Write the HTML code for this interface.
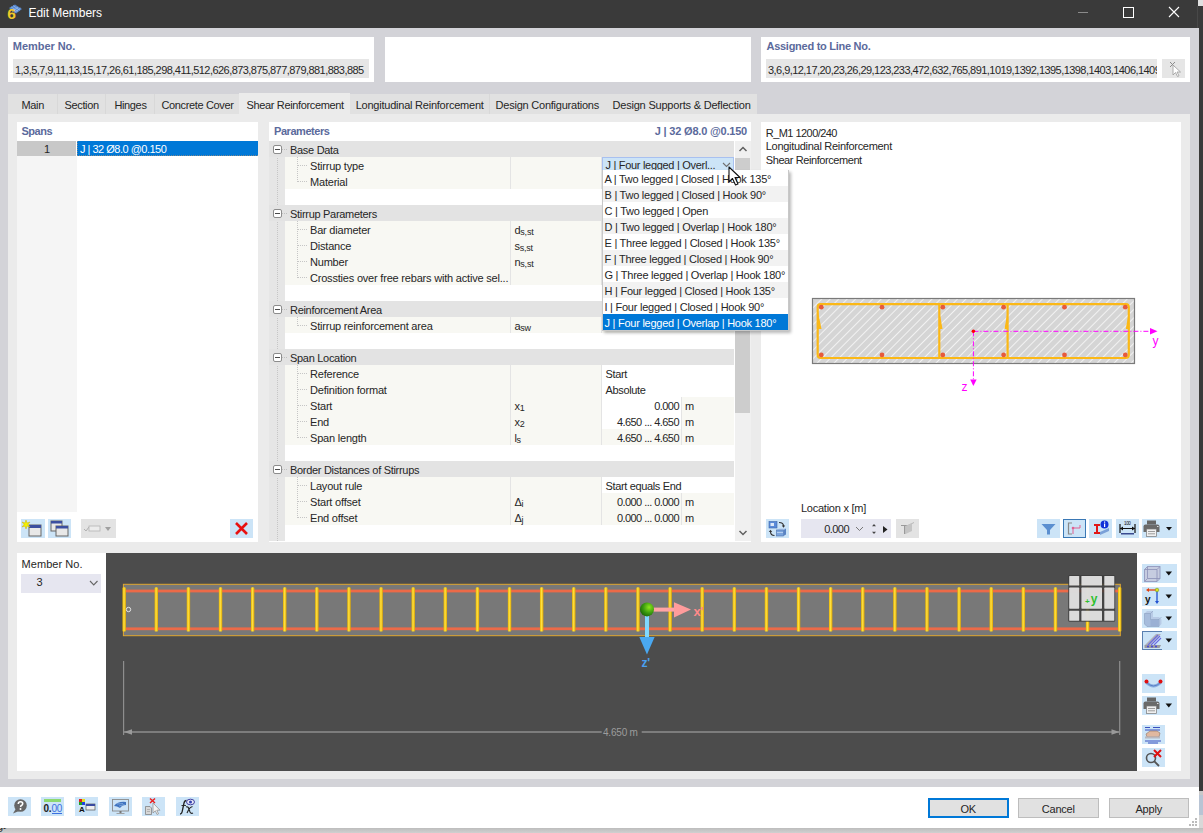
<!DOCTYPE html>
<html><head><meta charset="utf-8">
<style>
*{box-sizing:border-box;margin:0;padding:0}
html,body{width:1203px;height:833px;overflow:hidden}
body{position:relative;background:#d3d3d8;font-family:"Liberation Sans",sans-serif;font-size:11px;color:#262626;letter-spacing:-0.35px}
.a{position:absolute}
.t{position:absolute;white-space:nowrap;line-height:16px}
.w{background:#fff}
.hdr{font-weight:bold;color:#5b6a9c;letter-spacing:-0.45px}
.dig{letter-spacing:-0.55px}
svg{position:absolute;overflow:visible}
.btn{position:absolute;background:#cce4f7}
</style></head><body>

<div class="a" style="left:0px;top:0px;width:1203px;height:28px;background:#3a3a3a;"></div>
<div class="a" style="left:1199px;top:0px;width:4px;height:791px;background:#3a3a3a;"></div>
<div class="a" style="left:1198px;top:0px;width:5px;height:6px;background:#e0e0e0;"></div>
<div class="a" style="left:1197px;top:6px;width:1px;height:22px;background:#484848;"></div>
<svg style="left:0px;top:0px" width="28" height="24" viewBox="0 0 28 24">
<path d="M9 8L15 4.4L22 9L16 13.6Z" fill="#5585cc"/><path d="M11 6.8L18 11.3M13 5.6L20 10.2M12 11.6L18 7.2M14.5 12.5L20.5 8" stroke="#9cc0ee" stroke-width="0.7"/>
<text x="7.3" y="19.4" font-family="Liberation Sans" font-weight="bold" font-size="15.5" fill="#f0c828" style="letter-spacing:0">6</text></svg>
<div class="t" style="left:28.5px;top:5px;color:#fff;font-size:12px;letter-spacing:-0.05px">Edit Members</div>
<div class="a" style="left:1078px;top:12px;width:10px;height:1px;background:#8a8a8a;"></div>
<div class="a" style="left:1123px;top:7px;width:10.5px;height:10.5px;border:1px solid #fff"></div>
<svg style="left:1168px;top:6px" width="12" height="12"><path d="M1 1L11 11M11 1L1 11" stroke="#fff" stroke-width="1.1"/></svg>
<div class="a" style="left:8px;top:37px;width:366px;height:45px;background:#fff;"></div>
<div class="a" style="left:385px;top:37px;width:366px;height:45px;background:#fff;"></div>
<div class="a" style="left:761px;top:37px;width:429px;height:45px;background:#fff;"></div>
<div class="t hdr" style="left:12.8px;top:37.5px;letter-spacing:-0.05px">Member No.</div>
<div class="a" style="left:13px;top:59px;width:356px;height:19px;background:#e6e6e6;"></div>
<div class="t dig" style="left:15px;top:61.5px;">1,3,5,7,9,11,13,15,17,26,61,185,298,411,512,626,873,875,877,879,881,883,885</div>
<div class="t hdr" style="left:766.5px;top:37.5px;letter-spacing:-0.27px">Assigned to Line No.</div>
<div class="a" style="left:766px;top:59px;width:391px;height:19px;background:#e6e6e6;overflow:hidden">
<div class="t dig" style="left:2px;top:2.5px;">3,6,9,12,17,20,23,26,29,123,233,472,632,765,891,1019,1392,1395,1398,1403,1406,1409</div>
</div>
<div class="a" style="left:1162px;top:59px;width:23px;height:19px;background:#e6e6e6;"></div>
<svg style="left:1167.5px;top:60.5px" width="16" height="16"><path d="M2 1L7 6M7 1L2 6" stroke="#8c8c8c" stroke-width="1"/><path d="M5 4L5 14L7.5 11.5L9.5 15.5L11 14.8L9 11L12.5 11Z" fill="#fff" stroke="#9a9a9a" stroke-width="0.8"/></svg>
<div class="a" style="left:8px;top:94px;width:749px;height:20px;background:#e1e1e1;"></div>
<div class="a" style="left:57px;top:94px;width:1px;height:20px;background:#d8d8d8;"></div>
<div class="a" style="left:105px;top:94px;width:1px;height:20px;background:#d8d8d8;"></div>
<div class="a" style="left:154px;top:94px;width:1px;height:20px;background:#d8d8d8;"></div>
<div class="a" style="left:489px;top:94px;width:1px;height:20px;background:#d8d8d8;"></div>
<div class="a" style="left:8px;top:114px;width:1182px;height:665px;background:#ebebeb;"></div>
<div class="a" style="left:239px;top:93px;width:111px;height:21px;background:#ebebeb;"></div>
<div class="t" style="left:21.5px;top:96.8px;letter-spacing:-0.35px">Main</div>
<div class="t" style="left:64.5px;top:96.8px;letter-spacing:-0.35px">Section</div>
<div class="t" style="left:114.4px;top:96.8px;letter-spacing:-0.35px">Hinges</div>
<div class="t" style="left:161.4px;top:96.8px;letter-spacing:-0.35px">Concrete Cover</div>
<div class="t" style="left:246.5px;top:96.8px;letter-spacing:-0.35px">Shear Reinforcement</div>
<div class="t" style="left:355.7px;top:96.8px;letter-spacing:-0.23px">Longitudinal Reinforcement</div>
<div class="t" style="left:495.6px;top:96.8px;letter-spacing:-0.23px">Design Configurations</div>
<div class="t" style="left:612.5px;top:96.8px;letter-spacing:-0.2px">Design Supports &amp; Deflection</div>
<div class="a" style="left:17px;top:122px;width:241px;height:420px;background:#fff;"></div>
<div class="a" style="left:269px;top:122px;width:482px;height:420px;background:#fff;"></div>
<div class="a" style="left:761px;top:122px;width:420px;height:420px;background:#fff;"></div>
<div class="t hdr" style="left:21.4px;top:122.80000000000001px;">Spans</div>
<div class="a" style="left:17px;top:156px;width:60px;height:356px;background:#f5f5f5;"></div>
<div class="a" style="left:17px;top:141px;width:59px;height:15px;background:#c8c8c8;"></div>
<div class="t" style="left:44px;top:140.8px;">1</div>
<div class="a" style="left:77px;top:141px;width:181px;height:15px;background:#0078d7;"></div>
<div class="a" style="left:77px;top:141px;width:181px;height:15px;border-left:1px dotted rgba(230,150,80,0.55);border-bottom:1px dotted rgba(230,150,80,0.55)"></div>
<div class="t" style="left:80px;top:140.8px;color:#fff;letter-spacing:-0.5px">J | 32 Ø8.0 @0.150</div>
<div class="a" style="left:21px;top:519px;width:24px;height:19px;background:#cce4f7;"></div>
<div class="a" style="left:48px;top:519px;width:23px;height:19px;background:#cce4f7;"></div>
<div class="a" style="left:81px;top:519px;width:35px;height:19px;background:#e3e3e3;"></div>
<div class="a" style="left:230px;top:519px;width:23px;height:19px;background:#cce4f7;"></div>
<svg style="left:21px;top:519px" width="24" height="19">
<rect x="8" y="6" width="12" height="11" fill="#e8e8e8" stroke="#666" stroke-width="1"/><rect x="8" y="6" width="12" height="3" fill="#3c4fa0"/>
<path d="M5 1L6 4L9 3L7 5.5L9 8L6 7L5 10L4 7L1 8L3 5.5L1 3L4 4Z" fill="#f5f000" stroke="#c8b400" stroke-width="0.5"/></svg>
<svg style="left:48px;top:519px" width="23" height="19">
<rect x="3" y="2" width="11" height="10" fill="#e8e8e8" stroke="#666"/><rect x="3" y="2" width="11" height="2.5" fill="#3c4fa0"/>
<rect x="8" y="7" width="12" height="10" fill="#e8e8e8" stroke="#666"/><rect x="8" y="7" width="12" height="2.5" fill="#3c4fa0"/></svg>
<svg style="left:81px;top:519px" width="35" height="19">
<path d="M3 10L5 12L8 8" stroke="#b0b0b0" fill="none"/><rect x="8" y="7" width="11" height="5" fill="#ececec" stroke="#b5b5b5" stroke-width="0.8"/><path d="M24 8L30 8L27 12Z" fill="#a0a0a0"/></svg>
<svg style="left:230px;top:519px" width="23" height="19"><path d="M6 4L17 15M17 4L6 15" stroke="#e81010" stroke-width="2.6"/></svg>
<div class="t hdr" style="left:274px;top:123px;">Parameters</div>
<div class="t hdr" style="left:560px;width:187px;top:123px;text-align:right;letter-spacing:-0.2px">J | 32 Ø8.0 @0.150</div>
<div class="a" style="left:269px;top:141px;width:16px;height:400px;background:#e6e6e6;"></div>
<div class="a" style="left:277px;top:141px;width:0;height:400px;border-left:1px dotted #c6c6c6"></div>
<div class="a" style="left:269px;top:141px;width:465px;height:16px;background:#e3e3e3;"></div>
<div class="a" style="left:273px;top:145px;width:9px;height:9px;border:1px solid #8c8c8c;border-radius:2px;background:#fff"></div>
<div class="a" style="left:275px;top:149px;width:5px;height:1px;background:#4a4a4a;"></div>
<div class="a" style="left:282px;top:149px;width:5px;height:0;border-top:1px dotted #c0c0c0"></div>
<div class="t" style="left:290px;top:141.5px;letter-spacing:-0.3px">Base Data</div>
<div class="a" style="left:285px;top:157px;width:449px;height:16px;background:#f8f8f3;"></div>
<div class="a" style="left:510px;top:157px;width:1px;height:16px;background:#e4e4e4;"></div>
<div class="a" style="left:601px;top:157px;width:1px;height:16px;background:#e4e4e4;"></div>
<div class="a" style="left:298px;top:165px;width:9px;height:0;border-top:1px dotted #c6c6c6"></div>
<div class="t" style="left:310px;top:157.5px;letter-spacing:-0.2px">Stirrup type</div>
<div class="a" style="left:285px;top:173px;width:449px;height:16px;background:#f8f8f3;"></div>
<div class="a" style="left:510px;top:173px;width:1px;height:16px;background:#e4e4e4;"></div>
<div class="a" style="left:601px;top:173px;width:1px;height:16px;background:#e4e4e4;"></div>
<div class="a" style="left:298px;top:181px;width:9px;height:0;border-top:1px dotted #c6c6c6"></div>
<div class="t" style="left:310px;top:173.5px;letter-spacing:-0.2px">Material</div>
<div class="a" style="left:285px;top:189px;width:449px;height:16px;background:#fff;"></div>
<div class="a" style="left:269px;top:205px;width:465px;height:16px;background:#e3e3e3;"></div>
<div class="a" style="left:273px;top:209px;width:9px;height:9px;border:1px solid #8c8c8c;border-radius:2px;background:#fff"></div>
<div class="a" style="left:275px;top:213px;width:5px;height:1px;background:#4a4a4a;"></div>
<div class="a" style="left:282px;top:213px;width:5px;height:0;border-top:1px dotted #c0c0c0"></div>
<div class="t" style="left:290px;top:205.5px;letter-spacing:-0.3px">Stirrup Parameters</div>
<div class="a" style="left:285px;top:221px;width:449px;height:16px;background:#f8f8f3;"></div>
<div class="a" style="left:510px;top:221px;width:1px;height:16px;background:#e4e4e4;"></div>
<div class="a" style="left:601px;top:221px;width:1px;height:16px;background:#e4e4e4;"></div>
<div class="a" style="left:298px;top:229px;width:9px;height:0;border-top:1px dotted #c6c6c6"></div>
<div class="t" style="left:310px;top:221.5px;letter-spacing:-0.2px">Bar diameter</div>
<div class="t" style="left:514.5px;top:221.5px;">d<span style="font-size:9px;position:relative;top:1px;letter-spacing:-0.2px">s,st</span></div>
<div class="a" style="left:285px;top:237px;width:449px;height:16px;background:#f8f8f3;"></div>
<div class="a" style="left:510px;top:237px;width:1px;height:16px;background:#e4e4e4;"></div>
<div class="a" style="left:601px;top:237px;width:1px;height:16px;background:#e4e4e4;"></div>
<div class="a" style="left:298px;top:245px;width:9px;height:0;border-top:1px dotted #c6c6c6"></div>
<div class="t" style="left:310px;top:237.5px;letter-spacing:-0.2px">Distance</div>
<div class="t" style="left:514.5px;top:237.5px;">s<span style="font-size:9px;position:relative;top:1px;letter-spacing:-0.2px">s,st</span></div>
<div class="a" style="left:285px;top:253px;width:449px;height:16px;background:#f8f8f3;"></div>
<div class="a" style="left:510px;top:253px;width:1px;height:16px;background:#e4e4e4;"></div>
<div class="a" style="left:601px;top:253px;width:1px;height:16px;background:#e4e4e4;"></div>
<div class="a" style="left:298px;top:261px;width:9px;height:0;border-top:1px dotted #c6c6c6"></div>
<div class="t" style="left:310px;top:253.5px;letter-spacing:-0.2px">Number</div>
<div class="t" style="left:514.5px;top:253.5px;">n<span style="font-size:9px;position:relative;top:1px;letter-spacing:-0.2px">s,st</span></div>
<div class="a" style="left:285px;top:269px;width:449px;height:16px;background:#f8f8f3;"></div>
<div class="a" style="left:510px;top:269px;width:1px;height:16px;background:#e4e4e4;"></div>
<div class="a" style="left:601px;top:269px;width:1px;height:16px;background:#e4e4e4;"></div>
<div class="a" style="left:298px;top:277px;width:9px;height:0;border-top:1px dotted #c6c6c6"></div>
<div class="t" style="left:310px;top:269.5px;letter-spacing:-0.2px">Crossties over free rebars with active sel...</div>
<div class="a" style="left:285px;top:285px;width:449px;height:16px;background:#fff;"></div>
<div class="a" style="left:269px;top:301px;width:465px;height:16px;background:#e3e3e3;"></div>
<div class="a" style="left:273px;top:305px;width:9px;height:9px;border:1px solid #8c8c8c;border-radius:2px;background:#fff"></div>
<div class="a" style="left:275px;top:309px;width:5px;height:1px;background:#4a4a4a;"></div>
<div class="a" style="left:282px;top:309px;width:5px;height:0;border-top:1px dotted #c0c0c0"></div>
<div class="t" style="left:290px;top:301.5px;letter-spacing:-0.3px">Reinforcement Area</div>
<div class="a" style="left:285px;top:317px;width:449px;height:16px;background:#f8f8f3;"></div>
<div class="a" style="left:510px;top:317px;width:1px;height:16px;background:#e4e4e4;"></div>
<div class="a" style="left:601px;top:317px;width:1px;height:16px;background:#e4e4e4;"></div>
<div class="a" style="left:298px;top:325px;width:9px;height:0;border-top:1px dotted #c6c6c6"></div>
<div class="t" style="left:310px;top:317.5px;letter-spacing:-0.2px">Stirrup reinforcement area</div>
<div class="t" style="left:514.5px;top:317.5px;">a<span style="font-size:9px;position:relative;top:1px;letter-spacing:-0.2px">sw</span></div>
<div class="a" style="left:285px;top:333px;width:449px;height:16px;background:#fff;"></div>
<div class="a" style="left:269px;top:349px;width:465px;height:16px;background:#e3e3e3;"></div>
<div class="a" style="left:273px;top:353px;width:9px;height:9px;border:1px solid #8c8c8c;border-radius:2px;background:#fff"></div>
<div class="a" style="left:275px;top:357px;width:5px;height:1px;background:#4a4a4a;"></div>
<div class="a" style="left:282px;top:357px;width:5px;height:0;border-top:1px dotted #c0c0c0"></div>
<div class="t" style="left:290px;top:349.5px;letter-spacing:-0.3px">Span Location</div>
<div class="a" style="left:285px;top:365px;width:449px;height:16px;background:#f8f8f3;"></div>
<div class="a" style="left:510px;top:365px;width:1px;height:16px;background:#e4e4e4;"></div>
<div class="a" style="left:601px;top:365px;width:1px;height:16px;background:#e4e4e4;"></div>
<div class="a" style="left:298px;top:373px;width:9px;height:0;border-top:1px dotted #c6c6c6"></div>
<div class="t" style="left:310px;top:365.5px;letter-spacing:-0.2px">Reference</div>
<div class="a" style="left:602px;top:365px;width:132px;height:16px;background:#fff;"></div>
<div class="t" style="left:605.5px;top:365.5px;">Start</div>
<div class="a" style="left:285px;top:381px;width:449px;height:16px;background:#f8f8f3;"></div>
<div class="a" style="left:510px;top:381px;width:1px;height:16px;background:#e4e4e4;"></div>
<div class="a" style="left:601px;top:381px;width:1px;height:16px;background:#e4e4e4;"></div>
<div class="a" style="left:298px;top:389px;width:9px;height:0;border-top:1px dotted #c6c6c6"></div>
<div class="t" style="left:310px;top:381.5px;letter-spacing:-0.2px">Definition format</div>
<div class="a" style="left:602px;top:381px;width:132px;height:16px;background:#fff;"></div>
<div class="t" style="left:605.5px;top:381.5px;">Absolute</div>
<div class="a" style="left:285px;top:397px;width:449px;height:16px;background:#f8f8f3;"></div>
<div class="a" style="left:510px;top:397px;width:1px;height:16px;background:#e4e4e4;"></div>
<div class="a" style="left:601px;top:397px;width:1px;height:16px;background:#e4e4e4;"></div>
<div class="a" style="left:298px;top:405px;width:9px;height:0;border-top:1px dotted #c6c6c6"></div>
<div class="t" style="left:310px;top:397.5px;letter-spacing:-0.2px">Start</div>
<div class="t" style="left:514.5px;top:397.5px;">x<span style="font-size:9px;position:relative;top:1px;letter-spacing:-0.2px">1</span></div>
<div class="a" style="left:602px;top:397px;width:79px;height:16px;background:#fff;"></div>
<div class="a" style="left:681px;top:397px;width:1px;height:16px;background:#e4e4e4;"></div>
<div class="t dig" style="left:602px;width:77px;top:397.5px;text-align:right">0.000</div>
<div class="t" style="left:685px;top:397.5px;">m</div>
<div class="a" style="left:285px;top:413px;width:449px;height:16px;background:#f8f8f3;"></div>
<div class="a" style="left:510px;top:413px;width:1px;height:16px;background:#e4e4e4;"></div>
<div class="a" style="left:601px;top:413px;width:1px;height:16px;background:#e4e4e4;"></div>
<div class="a" style="left:298px;top:421px;width:9px;height:0;border-top:1px dotted #c6c6c6"></div>
<div class="t" style="left:310px;top:413.5px;letter-spacing:-0.2px">End</div>
<div class="t" style="left:514.5px;top:413.5px;">x<span style="font-size:9px;position:relative;top:1px;letter-spacing:-0.2px">2</span></div>
<div class="a" style="left:602px;top:413px;width:79px;height:16px;background:#fff;"></div>
<div class="a" style="left:681px;top:413px;width:1px;height:16px;background:#e4e4e4;"></div>
<div class="t dig" style="left:602px;width:77px;top:413.5px;text-align:right">4.650 ... 4.650</div>
<div class="t" style="left:685px;top:413.5px;">m</div>
<div class="a" style="left:285px;top:429px;width:449px;height:16px;background:#f8f8f3;"></div>
<div class="a" style="left:510px;top:429px;width:1px;height:16px;background:#e4e4e4;"></div>
<div class="a" style="left:601px;top:429px;width:1px;height:16px;background:#e4e4e4;"></div>
<div class="a" style="left:298px;top:437px;width:9px;height:0;border-top:1px dotted #c6c6c6"></div>
<div class="t" style="left:310px;top:429.5px;letter-spacing:-0.2px">Span length</div>
<div class="t" style="left:514.5px;top:429.5px;">l<span style="font-size:9px;position:relative;top:1px;letter-spacing:-0.2px">s</span></div>
<div class="a" style="left:602px;top:429px;width:79px;height:16px;background:#f8f8f3;"></div>
<div class="a" style="left:681px;top:429px;width:1px;height:16px;background:#e4e4e4;"></div>
<div class="t dig" style="left:602px;width:77px;top:429.5px;text-align:right">4.650 ... 4.650</div>
<div class="t" style="left:685px;top:429.5px;">m</div>
<div class="a" style="left:285px;top:445px;width:449px;height:16px;background:#fff;"></div>
<div class="a" style="left:269px;top:461px;width:465px;height:16px;background:#e3e3e3;"></div>
<div class="a" style="left:273px;top:465px;width:9px;height:9px;border:1px solid #8c8c8c;border-radius:2px;background:#fff"></div>
<div class="a" style="left:275px;top:469px;width:5px;height:1px;background:#4a4a4a;"></div>
<div class="a" style="left:282px;top:469px;width:5px;height:0;border-top:1px dotted #c0c0c0"></div>
<div class="t" style="left:290px;top:461.5px;letter-spacing:-0.3px">Border Distances of Stirrups</div>
<div class="a" style="left:285px;top:477px;width:449px;height:16px;background:#f8f8f3;"></div>
<div class="a" style="left:510px;top:477px;width:1px;height:16px;background:#e4e4e4;"></div>
<div class="a" style="left:601px;top:477px;width:1px;height:16px;background:#e4e4e4;"></div>
<div class="a" style="left:298px;top:485px;width:9px;height:0;border-top:1px dotted #c6c6c6"></div>
<div class="t" style="left:310px;top:477.5px;letter-spacing:-0.2px">Layout rule</div>
<div class="a" style="left:602px;top:477px;width:132px;height:16px;background:#fff;"></div>
<div class="t" style="left:605.5px;top:477.5px;">Start equals End</div>
<div class="a" style="left:285px;top:493px;width:449px;height:16px;background:#f8f8f3;"></div>
<div class="a" style="left:510px;top:493px;width:1px;height:16px;background:#e4e4e4;"></div>
<div class="a" style="left:601px;top:493px;width:1px;height:16px;background:#e4e4e4;"></div>
<div class="a" style="left:298px;top:501px;width:9px;height:0;border-top:1px dotted #c6c6c6"></div>
<div class="t" style="left:310px;top:493.5px;letter-spacing:-0.2px">Start offset</div>
<div class="t" style="left:514.5px;top:493.5px;">Δ<span style="font-size:9px;position:relative;top:1px;letter-spacing:-0.2px">i</span></div>
<div class="a" style="left:602px;top:493px;width:79px;height:16px;background:#f8f8f3;"></div>
<div class="a" style="left:681px;top:493px;width:1px;height:16px;background:#e4e4e4;"></div>
<div class="t dig" style="left:602px;width:77px;top:493.5px;text-align:right">0.000 ... 0.000</div>
<div class="t" style="left:685px;top:493.5px;">m</div>
<div class="a" style="left:285px;top:509px;width:449px;height:16px;background:#f8f8f3;"></div>
<div class="a" style="left:510px;top:509px;width:1px;height:16px;background:#e4e4e4;"></div>
<div class="a" style="left:601px;top:509px;width:1px;height:16px;background:#e4e4e4;"></div>
<div class="a" style="left:298px;top:517px;width:9px;height:0;border-top:1px dotted #c6c6c6"></div>
<div class="t" style="left:310px;top:509.5px;letter-spacing:-0.2px">End offset</div>
<div class="t" style="left:514.5px;top:509.5px;">Δ<span style="font-size:9px;position:relative;top:1px;letter-spacing:-0.2px">j</span></div>
<div class="a" style="left:602px;top:509px;width:79px;height:16px;background:#f8f8f3;"></div>
<div class="a" style="left:681px;top:509px;width:1px;height:16px;background:#e4e4e4;"></div>
<div class="t dig" style="left:602px;width:77px;top:509.5px;text-align:right">0.000 ... 0.000</div>
<div class="t" style="left:685px;top:509.5px;">m</div>
<div class="a" style="left:285px;top:525px;width:449px;height:16px;background:#fff;"></div>
<div class="a" style="left:297px;top:157px;width:0;height:25px;border-left:1px dotted #c6c6c6"></div>
<div class="a" style="left:297px;top:221px;width:0;height:57px;border-left:1px dotted #c6c6c6"></div>
<div class="a" style="left:297px;top:317px;width:0;height:9px;border-left:1px dotted #c6c6c6"></div>
<div class="a" style="left:297px;top:365px;width:0;height:73px;border-left:1px dotted #c6c6c6"></div>
<div class="a" style="left:297px;top:477px;width:0;height:41px;border-left:1px dotted #c6c6c6"></div>
<div class="a" style="left:735px;top:141px;width:16px;height:400px;background:#f0f0f0;"></div>
<div class="a" style="left:735px;top:158px;width:15px;height:255px;background:#cdcdcd;"></div>
<svg style="left:738px;top:145px" width="10" height="8"><path d="M1.5 6L5 2.5L8.5 6" stroke="#606060" stroke-width="1.5" fill="none"/></svg>
<svg style="left:738px;top:529px" width="10" height="8"><path d="M1.5 2L5 5.5L8.5 2" stroke="#606060" stroke-width="1.5" fill="none"/></svg>
<div class="a" style="left:602px;top:157px;width:132px;height:14px;background:#cce4f7;border:1px solid #a8c0f0;border-bottom:none"></div>
<div class="t" style="left:605.5px;top:157px;letter-spacing:-0.3px">J | Four legged | Overl...</div>
<svg style="left:722px;top:161px" width="10" height="8"><path d="M1 2L4.5 5.5L8 2" stroke="#707070" stroke-width="1.1" fill="none"/></svg>
<div class="a" style="left:602px;top:170px;width:187px;height:161px;background:#fff;box-shadow:2px 2px 3px rgba(0,0,0,0.28);border:1px solid #c8c8c8;border-top:none"></div>
<div class="t" style="left:604.5px;top:170.6px;letter-spacing:-0.25px">A | Two legged | Closed | Hook 135°</div>
<div class="a" style="left:603px;top:186px;width:185px;height:16px;background:#f2f2f2;"></div>
<div class="t" style="left:604.5px;top:186.6px;letter-spacing:-0.25px">B | Two legged | Closed | Hook 90°</div>
<div class="t" style="left:604.5px;top:202.6px;letter-spacing:-0.25px">C | Two legged | Open</div>
<div class="a" style="left:603px;top:218px;width:185px;height:16px;background:#f2f2f2;"></div>
<div class="t" style="left:604.5px;top:218.6px;letter-spacing:-0.25px">D | Two legged | Overlap | Hook 180°</div>
<div class="t" style="left:604.5px;top:234.6px;letter-spacing:-0.25px">E | Three legged | Closed | Hook 135°</div>
<div class="a" style="left:603px;top:250px;width:185px;height:16px;background:#f2f2f2;"></div>
<div class="t" style="left:604.5px;top:250.60000000000002px;letter-spacing:-0.25px">F | Three legged | Closed | Hook 90°</div>
<div class="t" style="left:604.5px;top:266.6px;letter-spacing:-0.25px">G | Three legged | Overlap | Hook 180°</div>
<div class="a" style="left:603px;top:282px;width:185px;height:16px;background:#f2f2f2;"></div>
<div class="t" style="left:604.5px;top:282.6px;letter-spacing:-0.25px">H | Four legged | Closed | Hook 135°</div>
<div class="t" style="left:604.5px;top:298.6px;letter-spacing:-0.25px">I | Four legged | Closed | Hook 90°</div>
<div class="a" style="left:603px;top:314px;width:185px;height:16px;background:#0078d7;"></div>
<div class="t" style="left:604.5px;top:314.6px;color:#fff;letter-spacing:-0.25px">J | Four legged | Overlap | Hook 180°</div>
<svg style="left:728px;top:166px" width="16" height="22"><path d="M1 1L1 16L4.5 12.5L7.5 19L10 18L7 11.5L12 11.5Z" fill="#fff" stroke="#111" stroke-width="1.1" stroke-linejoin="round"/></svg>
<div class="t" style="left:765.8px;top:125px;letter-spacing:-0.55px">R_M1 1200/240</div>
<div class="t" style="left:765.8px;top:138.3px;letter-spacing:-0.3px">Longitudinal Reinforcement</div>
<div class="t" style="left:765.8px;top:151.6px;letter-spacing:-0.42px">Shear Reinforcement</div>
<svg style="left:0;top:0" width="1203" height="833">
<defs><pattern id="hatch" width="6" height="6" patternUnits="userSpaceOnUse" patternTransform="rotate(45)"><rect width="6" height="6" fill="#d5d5d5"/><rect x="0" y="0" width="1" height="6" fill="#f2f2f2"/></pattern>
<clipPath id="secclip"><rect x="812.5" y="298.5" width="322" height="65"/></clipPath></defs>
<rect x="812.5" y="298.5" width="322" height="65" fill="url(#hatch)" stroke="#7a7a7a" stroke-width="1.2"/>
<rect x="817.7" y="304.2" width="311.1" height="53.8" rx="3" fill="none" stroke="#fbb817" stroke-width="2.2"/>
<line x1="939.3" y1="304" x2="939.3" y2="358" stroke="#fbb817" stroke-width="2.2"/>
<line x1="1007.6" y1="304" x2="1007.6" y2="358" stroke="#fbb817" stroke-width="2.2"/>
<path d="M818 312L821.5 329L818 329Z" fill="#fbb817"/>
<path d="M939.5 312L942.5 329L939.5 329Z" fill="#fbb817"/>
<path d="M1007.5 312L1004.5 329L1007.5 329Z" fill="#fbb817"/>
<path d="M1128.8 312L1125.8 329L1128.8 329Z" fill="#fbb817"/>
<circle cx="821.3" cy="307.2" r="2.4" fill="#e65a3c"/>
<circle cx="821.3" cy="354.9" r="2.4" fill="#e65a3c"/>
<circle cx="882" cy="307.2" r="2.4" fill="#e65a3c"/>
<circle cx="882" cy="354.9" r="2.4" fill="#e65a3c"/>
<circle cx="942.8" cy="307.2" r="2.4" fill="#e65a3c"/>
<circle cx="942.8" cy="354.9" r="2.4" fill="#e65a3c"/>
<circle cx="1003.6" cy="307.2" r="2.4" fill="#e65a3c"/>
<circle cx="1003.6" cy="354.9" r="2.4" fill="#e65a3c"/>
<circle cx="1064.5" cy="307.2" r="2.4" fill="#e65a3c"/>
<circle cx="1064.5" cy="354.9" r="2.4" fill="#e65a3c"/>
<circle cx="1125.3" cy="307.2" r="2.4" fill="#e65a3c"/>
<circle cx="1125.3" cy="354.9" r="2.4" fill="#e65a3c"/>
<line x1="973.4" y1="331.3" x2="1151" y2="331.3" stroke="#ff00ff" stroke-width="1" stroke-dasharray="5,2,1,2"/>
<path d="M1150 328L1157.5 331.3L1150 334.6Z" fill="#ff00ff"/>
<line x1="973.4" y1="331.3" x2="973.4" y2="380" stroke="#ff00ff" stroke-width="1" stroke-dasharray="5,2,1,2"/>
<path d="M970.2 379.5L973.4 386L976.6 379.5Z" fill="#ff00ff"/>
<circle cx="973.4" cy="331.3" r="1.8" fill="#ff0000"/>
<text x="1152.5" y="344.5" font-family="Liberation Sans" font-size="12" fill="#ff00ff">y</text>
<text x="961.5" y="390.5" font-family="Liberation Sans" font-size="12" fill="#ff00ff">z</text>
</svg>
<div class="t" style="left:801px;top:500px;letter-spacing:-0.25px">Location x [m]</div>
<div class="a" style="left:766px;top:519px;width:23px;height:19px;background:#cce4f7;"></div>
<svg style="left:766px;top:519px" width="23" height="19">
<rect x="3" y="2.5" width="8" height="6.5" fill="#5a8ad8" stroke="#3a68b0" stroke-width="0.6"/><rect x="4.5" y="4" width="3.5" height="3" fill="#dce8f8"/>
<path d="M10.5 11L13 9.5L20 9.5L17.5 11Z" fill="#b0ccf0"/><rect x="10.5" y="11" width="7" height="6" fill="#7aa4dc" stroke="#4a70b0" stroke-width="0.6"/><path d="M17.5 11L20 9.5L20 15.5L17.5 17Z" fill="#5a84c4"/><path d="M11 13.5L17 13.5" stroke="#cfe0f6" stroke-width="0.7"/>
<path d="M13 3.5Q17.5 3.5 17.5 7" stroke="#333" fill="none" stroke-width="1.1"/><path d="M15.8 6.5L17.5 8.8L19.2 6.5Z" fill="#333"/>
<path d="M8.5 16.5Q4.5 16.5 4.5 12.5" stroke="#333" fill="none" stroke-width="1.1"/><path d="M2.8 13L4.5 10.7L6.2 13Z" fill="#333"/></svg>
<div class="a" style="left:801px;top:519px;width:90px;height:19px;background:#e6e6f0;"></div>
<div class="t dig" style="left:801px;width:48px;top:521px;text-align:right">0.000</div>
<svg style="left:855px;top:526px" width="9" height="6"><path d="M1 1L4.5 4.5L8 1" stroke="#777" fill="none" stroke-width="1"/></svg>
<svg style="left:871px;top:523px" width="6" height="13"><path d="M3 1L5 3.3L1 3.3Z" fill="#444"/><path d="M3 11L5 8.7L1 8.7Z" fill="#444"/></svg>
<svg style="left:882px;top:525px" width="6" height="9"><path d="M1 1L5.5 4.5L1 8Z" fill="#222"/></svg>
<div class="a" style="left:896px;top:519px;width:23px;height:19px;background:#e3e3e3;"></div>
<svg style="left:896px;top:519px" width="23" height="19"><path d="M5 6L12 6L12 7L9.5 7L9.5 15L8 15L8 7L5 7Z" fill="#9a9a9a"/><path d="M12 6L18 3L18 4L12 7Z" fill="#b8b8b8"/><path d="M9.5 7L16 4L16 12L9.5 15Z" fill="#c4c4c4"/></svg>
<div class="a" style="left:1037px;top:519px;width:23px;height:19px;background:#cce4f7;"></div>
<div class="a" style="left:1063px;top:519px;width:23px;height:19px;background:#cce4f7;"></div>
<div class="a" style="left:1089px;top:519px;width:23px;height:19px;background:#cce4f7;"></div>
<div class="a" style="left:1116px;top:519px;width:23px;height:19px;background:#cce4f7;"></div>
<div class="a" style="left:1142px;top:519px;width:35px;height:19px;background:#cce4f7;"></div>
<div class="a" style="left:1063px;top:519px;width:23px;height:19px;border:1px solid #3a78b5"></div>
<svg style="left:1037px;top:519px" width="23" height="19"><path d="M4.5 5L18.5 5L13 11L13 15.5L10 15.5L10 11Z" fill="#5b8fd0"/></svg>
<svg style="left:1063px;top:519px" width="23" height="19"><path d="M9 4L5.5 4L5.5 15L9 15" stroke="#888" fill="none" stroke-width="1.2"/><path d="M10 9L17 9M10 9L10 15M17 6L17 9" stroke="#e06090" stroke-width="1" fill="none"/><circle cx="10" cy="9" r="1.3" fill="#e06090"/></svg>
<svg style="left:1089px;top:519px" width="23" height="19"><path d="M5 5L11 5L11 7L9 7L9 13L11 13L11 15L5 15L5 13L7 13L7 7L5 7Z" fill="#e01818"/><path d="M11 13L20 9L20 12L11 16Z" fill="#7aa0d8"/><circle cx="15.5" cy="5.5" r="4" fill="#1030d8"/><rect x="15" y="4.5" width="1.2" height="3.5" fill="#fff"/><rect x="15" y="2.5" width="1.2" height="1.2" fill="#fff"/></svg>
<svg style="left:1116px;top:519px" width="23" height="19"><path d="M4 5L4 14M19 5L19 14M4 9.5L19 9.5" stroke="#111" stroke-width="1.2"/><path d="M4 9.5L7 7.5L7 11.5Z M19 9.5L16 7.5L16 11.5Z" fill="#111"/><rect x="5" y="14" width="13" height="1.5" fill="#3a4a90"/><text x="8" y="6" font-size="4.5" font-family="Liberation Sans" fill="#111">100</text></svg>
<svg style="left:1142px;top:519px" width="35" height="19"><rect x="5" y="1.5" width="9" height="4" fill="#666"/><path d="M1.5 7.5Q1.5 5.5 3.5 5.5L15.5 5.5Q17.5 5.5 17.5 7.5L17.5 13L1.5 13Z" fill="#6a6a6a"/><rect x="15" y="7" width="1.5" height="1" fill="#ddd"/><rect x="4.5" y="10" width="10" height="7.5" fill="#f0f0f0" stroke="#777" stroke-width="0.7"/><path d="M6 12.5L13 12.5M6 14.8L13 14.8" stroke="#888" stroke-width="0.8"/><path d="M24 8L30 8L27 11.5Z" fill="#111"/></svg>
<div class="a" style="left:17px;top:553px;width:1164px;height:218px;background:#fff;"></div>
<div class="t" style="left:21.6px;top:555.8px;letter-spacing:0.05px">Member No.</div>
<div class="a" style="left:21px;top:574px;width:80px;height:19px;background:#e6e6f0;"></div>
<div class="t" style="left:36.6px;top:574.4px;">3</div>
<svg style="left:89px;top:580px" width="10" height="7"><path d="M1 1L4.75 5L8.5 1" stroke="#666" fill="none" stroke-width="1.1"/></svg>
<svg style="left:0;top:0" width="1203" height="833">
<defs><linearGradient id="stg" x1="0" x2="1" y1="0" y2="0"><stop offset="0" stop-color="#e8b400"/><stop offset="0.45" stop-color="#ffe040"/><stop offset="1" stop-color="#e0a800"/></linearGradient>
<radialGradient id="ball" cx="0.65" cy="0.35" r="0.7"><stop offset="0" stop-color="#8ce81a"/><stop offset="0.6" stop-color="#3a9a10"/><stop offset="1" stop-color="#1f6a08"/></radialGradient></defs>
<rect x="106" y="553" width="1031" height="218" fill="#4c4c4c"/>
<rect x="123.4" y="584.3" width="996.9" height="51.4" fill="#787878" stroke="#e0a830" stroke-width="1"/>
<rect x="123.5" y="589.6" width="996" height="2.8" fill="#ec6a48"/>
<rect x="123.5" y="627.4" width="996" height="2.8" fill="#ec6a48"/>
<rect x="122.50" y="587.2" width="3.4" height="44.4" rx="1.2" fill="url(#stg)"/>
<rect x="154.61" y="587.2" width="3.4" height="44.4" rx="1.2" fill="url(#stg)"/>
<rect x="186.73" y="587.2" width="3.4" height="44.4" rx="1.2" fill="url(#stg)"/>
<rect x="218.84" y="587.2" width="3.4" height="44.4" rx="1.2" fill="url(#stg)"/>
<rect x="250.95" y="587.2" width="3.4" height="44.4" rx="1.2" fill="url(#stg)"/>
<rect x="283.06" y="587.2" width="3.4" height="44.4" rx="1.2" fill="url(#stg)"/>
<rect x="315.18" y="587.2" width="3.4" height="44.4" rx="1.2" fill="url(#stg)"/>
<rect x="347.29" y="587.2" width="3.4" height="44.4" rx="1.2" fill="url(#stg)"/>
<rect x="379.40" y="587.2" width="3.4" height="44.4" rx="1.2" fill="url(#stg)"/>
<rect x="411.52" y="587.2" width="3.4" height="44.4" rx="1.2" fill="url(#stg)"/>
<rect x="443.63" y="587.2" width="3.4" height="44.4" rx="1.2" fill="url(#stg)"/>
<rect x="475.74" y="587.2" width="3.4" height="44.4" rx="1.2" fill="url(#stg)"/>
<rect x="507.85" y="587.2" width="3.4" height="44.4" rx="1.2" fill="url(#stg)"/>
<rect x="539.97" y="587.2" width="3.4" height="44.4" rx="1.2" fill="url(#stg)"/>
<rect x="572.08" y="587.2" width="3.4" height="44.4" rx="1.2" fill="url(#stg)"/>
<rect x="604.19" y="587.2" width="3.4" height="44.4" rx="1.2" fill="url(#stg)"/>
<rect x="636.31" y="587.2" width="3.4" height="44.4" rx="1.2" fill="url(#stg)"/>
<rect x="668.42" y="587.2" width="3.4" height="44.4" rx="1.2" fill="url(#stg)"/>
<rect x="700.53" y="587.2" width="3.4" height="44.4" rx="1.2" fill="url(#stg)"/>
<rect x="732.65" y="587.2" width="3.4" height="44.4" rx="1.2" fill="url(#stg)"/>
<rect x="764.76" y="587.2" width="3.4" height="44.4" rx="1.2" fill="url(#stg)"/>
<rect x="796.87" y="587.2" width="3.4" height="44.4" rx="1.2" fill="url(#stg)"/>
<rect x="828.98" y="587.2" width="3.4" height="44.4" rx="1.2" fill="url(#stg)"/>
<rect x="861.10" y="587.2" width="3.4" height="44.4" rx="1.2" fill="url(#stg)"/>
<rect x="893.21" y="587.2" width="3.4" height="44.4" rx="1.2" fill="url(#stg)"/>
<rect x="925.32" y="587.2" width="3.4" height="44.4" rx="1.2" fill="url(#stg)"/>
<rect x="957.44" y="587.2" width="3.4" height="44.4" rx="1.2" fill="url(#stg)"/>
<rect x="989.55" y="587.2" width="3.4" height="44.4" rx="1.2" fill="url(#stg)"/>
<rect x="1021.66" y="587.2" width="3.4" height="44.4" rx="1.2" fill="url(#stg)"/>
<rect x="1053.77" y="587.2" width="3.4" height="44.4" rx="1.2" fill="url(#stg)"/>
<rect x="1085.89" y="587.2" width="3.4" height="44.4" rx="1.2" fill="url(#stg)"/>
<rect x="1118.00" y="587.2" width="3.4" height="44.4" rx="1.2" fill="url(#stg)"/>
<circle cx="128.5" cy="609.5" r="2.2" fill="none" stroke="#eee" stroke-width="0.9"/>
<rect x="647" y="607.6" width="28" height="4" fill="#ffa4a4"/>
<path d="M674 602.2L691 609.6L674 617.5Z" fill="#ff9c9c"/>
<text x="693.5" y="615.5" font-family="Liberation Sans" font-weight="bold" font-size="13" fill="#ff8a8a">x'</text>
<rect x="645" y="612" width="4" height="26" fill="#80d8ff"/>
<path d="M639.3 637L654.6 637L647 654.5Z" fill="#4aa8f0"/>
<text x="641.5" y="666.5" font-family="Liberation Sans" font-weight="bold" font-size="12" fill="#4aa0f0">z'</text>
<circle cx="647" cy="609.4" r="7" fill="url(#ball)"/>
<line x1="123.6" y1="661" x2="123.6" y2="735" stroke="#8e8e8e" stroke-width="1.2"/>
<line x1="1119.7" y1="661" x2="1119.7" y2="735" stroke="#8e8e8e" stroke-width="1.2"/>
<line x1="124" y1="732" x2="601.7" y2="732" stroke="#8e8e8e" stroke-width="1.4"/>
<line x1="641.7" y1="732" x2="1119" y2="732" stroke="#8e8e8e" stroke-width="1.4"/>
<path d="M124 732L132 729.3L132 734.7Z" fill="#9a9a9a"/>
<path d="M1119.5 732L1111.5 729.3L1111.5 734.7Z" fill="#9a9a9a"/>
<text x="603" y="735.6" font-family="Liberation Sans" font-size="10" fill="#9c9c9c" letter-spacing="-0.2">4.650 m</text>
<rect x="1068.2" y="575" width="47" height="46.8" rx="1.5" fill="#3c3c3c" fill-opacity="0.85"/>
<rect x="1069.2" y="575.9" width="10" height="9.6" rx="0.6" fill="#ebebeb" fill-opacity="0.9"/>
<rect x="1069.2" y="587.6" width="10" height="21.1" rx="0.6" fill="#ebebeb" fill-opacity="0.9"/>
<rect x="1069.2" y="610.8" width="10" height="10" rx="0.6" fill="#ebebeb" fill-opacity="0.9"/>
<rect x="1081.4" y="575.9" width="20.6" height="9.6" rx="0.6" fill="#ebebeb" fill-opacity="0.9"/>
<rect x="1081.4" y="587.6" width="20.6" height="21.1" rx="0.6" fill="#ebebeb" fill-opacity="0.9"/>
<rect x="1081.4" y="610.8" width="20.6" height="10" rx="0.6" fill="#ebebeb" fill-opacity="0.9"/>
<rect x="1104.3" y="575.9" width="10" height="9.6" rx="0.6" fill="#ebebeb" fill-opacity="0.9"/>
<rect x="1104.3" y="587.6" width="10" height="21.1" rx="0.6" fill="#ebebeb" fill-opacity="0.9"/>
<rect x="1104.3" y="610.8" width="10" height="10" rx="0.6" fill="#ebebeb" fill-opacity="0.9"/>
<text x="1085" y="603.5" font-family="Liberation Sans" font-weight="bold" font-size="8" fill="#2ec02e">+</text>
<text x="1090.8" y="603" font-family="Liberation Sans" font-weight="bold" font-size="12" fill="#2ec02e">y</text>
</svg>
<div class="a" style="left:1142px;top:564px;width:35px;height:19px;background:#cce4f7;"></div>
<svg style="left:1165px;top:571px" width="8" height="6"><path d="M0.5 0.5L7 0.5L3.75 4.5Z" fill="#111"/></svg>
<div class="a" style="left:1142px;top:586.5px;width:35px;height:19px;background:#cce4f7;"></div>
<svg style="left:1165px;top:593.5px" width="8" height="6"><path d="M0.5 0.5L7 0.5L3.75 4.5Z" fill="#111"/></svg>
<div class="a" style="left:1142px;top:609px;width:35px;height:19px;background:#cce4f7;"></div>
<svg style="left:1165px;top:616px" width="8" height="6"><path d="M0.5 0.5L7 0.5L3.75 4.5Z" fill="#111"/></svg>
<div class="a" style="left:1142px;top:631px;width:35px;height:19px;background:#cce4f7;"></div>
<svg style="left:1165px;top:638px" width="8" height="6"><path d="M0.5 0.5L7 0.5L3.75 4.5Z" fill="#111"/></svg>
<div class="a" style="left:1142px;top:673.7px;width:23px;height:19px;background:#cce4f7;"></div>
<div class="a" style="left:1142px;top:725.3px;width:23px;height:19px;background:#cce4f7;"></div>
<div class="a" style="left:1142px;top:747.7px;width:23px;height:19px;background:#cce4f7;"></div>
<div class="a" style="left:1142px;top:695.8px;width:35px;height:19px;background:#cce4f7;"></div>
<svg style="left:1165px;top:702.8px" width="8" height="6"><path d="M0.5 0.5L7 0.5L3.75 4.5Z" fill="#111"/></svg>
<div class="a" style="left:1142px;top:631px;width:20px;height:19px;border:1px solid #5a80b0;border-right:none;border-bottom:1px solid #5a80b0"></div>
<svg style="left:1142px;top:564px" width="23" height="19"><path d="M2.5 5.5L5.5 2.5L18 2.5L18 14.5L15 17.5L2.5 17.5Z" fill="#c4c8dc" fill-opacity="0.85"/><path d="M2.5 5.5L15 5.5L15 17.5L2.5 17.5Z M15 5.5L18 2.5 M15 17.5L18 14.5 M2.5 5.5L5.5 2.5L18 2.5L18 14.5 M5.5 2.5L5.5 14.5L18 14.5 M5.5 14.5L2.5 17.5" fill="none" stroke="#8c90b8" stroke-width="0.8"/></svg>
<svg style="left:1142px;top:586.5px" width="23" height="19"><path d="M15 3L6 3" stroke="#e04010" stroke-width="1.3"/><path d="M4 3L7 1L7 5Z" fill="#e04010"/><path d="M15 3L15 15" stroke="#2050d0" stroke-width="1.3"/><path d="M13 14L15 17L17 14Z" fill="#2050d0"/><circle cx="15" cy="3" r="1.8" fill="#e0e020" stroke="#70a020" stroke-width="0.6"/><text x="3" y="16" font-family="Liberation Sans" font-weight="bold" font-size="10" fill="#111">y</text></svg>
<svg style="left:1142px;top:609px" width="23" height="19"><path d="M2.5 4.5L5 2L11 2L11 8L17 8L19.5 10.5L19.5 15L17 17.5L5 17.5L2.5 15Z" fill="#b8cbe6"/><path d="M2.5 4.5L8.5 4.5L8.5 10.5L17 10.5L17 17.5L5 17.5L2.5 15Z" fill="#a6bcdc" stroke="#8aa0c0" stroke-width="0.6"/><path d="M8.5 4.5L11 2M17 10.5L19.5 8" stroke="#8aa0c0" stroke-width="0.6"/><rect x="8.5" y="11" width="8" height="6" fill="#9ab0d4"/></svg>
<svg style="left:1142px;top:631px" width="23" height="19"><path d="M3 14L14 3L19 3L8 14Z" fill="#b0b0b8"/><path d="M6 14L16 4M9 14L18 5M12 14L19 7" stroke="#6a6ae0" stroke-width="1.1"/><path d="M2.5 14L19 14L17.5 17L2.5 17Z" fill="#9a9aa0"/><circle cx="6" cy="15.5" r="0.9" fill="#3a3ae0"/><circle cx="10" cy="15.5" r="0.9" fill="#3a3ae0"/><circle cx="14" cy="15.5" r="0.9" fill="#3a3ae0"/></svg>
<svg style="left:1142px;top:673.7px" width="23" height="19"><path d="M4 8Q11.5 16 19 8" stroke="#8ab0e0" stroke-width="3" fill="none"/><path d="M4 8Q11.5 16 19 8" stroke="#5a80c8" stroke-width="1" fill="none"/><circle cx="4.5" cy="7.5" r="2" fill="#e01010"/><circle cx="18.5" cy="7.5" r="2" fill="#e01010"/></svg>
<svg style="left:1142px;top:695.8px" width="35" height="19"><rect x="5" y="1.5" width="9" height="4" fill="#666"/><path d="M1.5 7.5Q1.5 5.5 3.5 5.5L15.5 5.5Q17.5 5.5 17.5 7.5L17.5 13L1.5 13Z" fill="#6a6a6a"/><rect x="15" y="7" width="1.5" height="1" fill="#ddd"/><rect x="4.5" y="10" width="10" height="7.5" fill="#f0f0f0" stroke="#777" stroke-width="0.7"/><path d="M6 12.5L13 12.5M6 14.8L13 14.8" stroke="#888" stroke-width="0.8"/></svg>
<svg style="left:1142px;top:725.3px" width="23" height="19"><path d="M3 2.5L8 2.5M11 2.5L18 2.5M3 5L18 5" stroke="#3a50c0" stroke-width="1"/><path d="M4 9L8 6L15 6L18 8L17 12L5 12Z" fill="#e0b8a0" stroke="#907060" stroke-width="0.6"/><rect x="3" y="11.5" width="15" height="2" fill="#b8b8c0"/><path d="M3 16L19 16M6 18L16 18" stroke="#3a50c0" stroke-width="1.1"/></svg>
<svg style="left:1142px;top:747.7px" width="23" height="19"><circle cx="9" cy="10" r="4.5" fill="none" stroke="#555" stroke-width="1.6"/><path d="M12 13L17 18" stroke="#555" stroke-width="1.8"/><path d="M12 2L19 9M19 2L12 9" stroke="#e01010" stroke-width="2"/></svg>
<div class="a" style="left:0px;top:787px;width:1199px;height:41px;background:#fff;"></div>
<div class="a" style="left:1199px;top:791px;width:4px;height:4px;background:#c8c8c8;"></div>
<div class="a" style="left:1199px;top:795px;width:4px;height:20px;background:#b8c4d4;"></div>
<div class="a" style="left:1199px;top:815px;width:4px;height:13px;background:#d8d8d8;"></div>
<div class="a" style="left:0;top:828px;width:1203px;height:5px;background:linear-gradient(#bdbdbd,#d0d0d0)"></div>
<div class="a" style="left:0;top:828px;width:20px;height:5px;overflow:hidden"><div class="t" style="left:-3px;top:-10px;color:#222;letter-spacing:0">g&gt;</div></div>
<div class="a" style="left:8px;top:796.8px;width:23px;height:19px;background:#cce4f7;"></div>
<div class="a" style="left:41.4px;top:796.8px;width:23px;height:19px;background:#cce4f7;"></div>
<div class="a" style="left:75px;top:796.8px;width:23px;height:19px;background:#cce4f7;"></div>
<div class="a" style="left:108.7px;top:796.8px;width:23px;height:19px;background:#cce4f7;"></div>
<div class="a" style="left:142.2px;top:796.8px;width:23px;height:19px;background:#cce4f7;"></div>
<div class="a" style="left:176px;top:796.8px;width:23px;height:19px;background:#cce4f7;"></div>
<svg style="left:8px;top:797px" width="23" height="19"><circle cx="12.5" cy="8.5" r="6.3" fill="#666"/><path d="M5 16.5L8 11.5L11 14Z" fill="#666"/><path d="M10.3 7Q10.3 4.8 12.5 4.8Q14.7 4.8 14.7 6.8Q14.7 8 13 8.8L12.5 10" stroke="#fff" stroke-width="1.6" fill="none"/><circle cx="12.5" cy="12" r="1" fill="#fff"/></svg>
<svg style="left:41.4px;top:797px" width="23" height="19"><rect x="3" y="2" width="17" height="3" fill="#8cd870"/><text x="2.5" y="15" font-family="Liberation Sans" font-weight="bold" font-size="10" fill="#222">0.</text><text x="10.5" y="15" font-family="Liberation Sans" font-size="10" fill="#3a70e0">00</text><rect x="11" y="16" width="10" height="1" fill="#3a70e0"/></svg>
<svg style="left:75px;top:797px" width="23" height="19"><rect x="4" y="2" width="3" height="3" fill="#e02020"/><rect x="7" y="2" width="3" height="3" fill="#e0e020"/><rect x="4" y="5" width="3" height="3" fill="#20a020"/><rect x="7" y="5" width="3" height="3" fill="#2040e0"/><text x="4" y="15" font-family="Liberation Sans" font-weight="bold" font-size="8" fill="#111">A</text><rect x="11" y="7" width="9" height="6" fill="#eee" stroke="#555" stroke-width="0.7"/><rect x="11" y="7" width="9" height="2" fill="#3a4aa0"/></svg>
<svg style="left:108.7px;top:797px" width="23" height="19"><rect x="3.5" y="2.5" width="16" height="11.5" fill="none" stroke="#8a8a8a" stroke-width="0.9"/><path d="M5 9Q9 4 17 5L17 8Q13 8 11 11Q8 9 5 9Z" fill="#3f74c0"/><path d="M8 7L14 6.5M10 9L15.5 7.5" stroke="#9cc0ea" stroke-width="0.6"/><rect x="10.5" y="14" width="2" height="2" fill="#777"/><rect x="7.5" y="16" width="8" height="0.9" fill="#999"/></svg>
<svg style="left:142.2px;top:797px" width="23" height="19"><path d="M8 1.5L13 6M13 1.5L8 6" stroke="#e82020" stroke-width="1.5"/><path d="M3.5 9.5L8 9.5L9.5 11L9.5 17.5L3.5 17.5Z" fill="#d8d8d8" stroke="#777" stroke-width="0.7"/><path d="M5 12.5L8 12.5M5 14.5L8 14.5" stroke="#999" stroke-width="0.6"/><path d="M11 6L11 16L13.3 13.8L15 17.5L16.5 16.8L14.8 13.2L18 13.2Z" fill="#f4f4f4" stroke="#888" stroke-width="0.7"/></svg>
<svg style="left:176px;top:797px" width="23" height="19"><path d="M4 17Q6 17 6.5 13L8 6Q8.5 3.5 10.5 3.5" stroke="#222" stroke-width="1.3" fill="none"/><path d="M5.5 8.5L10 8.5" stroke="#222" stroke-width="0.9"/><path d="M10 10Q12 9 13 12L14 15Q15 17 17 16M16.5 9.5Q14 10 12.5 13L11 16" stroke="#222" stroke-width="1.1" fill="none"/><ellipse cx="14.5" cy="5" rx="4" ry="2.8" fill="#e8e8f8" stroke="#4040a0" stroke-width="1"/><circle cx="14.5" cy="5" r="1.5" fill="#3040b0"/></svg>
<div class="a" style="left:928px;top:797.8px;width:80.5px;height:20.5px;background:#e1e1e1;border:1px solid #bdbdbd"></div>
<div class="t" style="left:928px;width:80.5px;top:800.5px;text-align:center;letter-spacing:-0.2px">OK</div>
<div class="a" style="left:1018px;top:797.8px;width:80.5px;height:20.5px;background:#e1e1e1;border:1px solid #bdbdbd"></div>
<div class="t" style="left:1018px;width:80.5px;top:800.5px;text-align:center;letter-spacing:-0.2px">Cancel</div>
<div class="a" style="left:1108.5px;top:797.8px;width:80.5px;height:20.5px;background:#e1e1e1;border:1px solid #bdbdbd"></div>
<div class="t" style="left:1108.5px;width:80.5px;top:800.5px;text-align:center;letter-spacing:-0.2px">Apply</div>
<div class="a" style="left:928px;top:797.8px;width:80.5px;height:20.5px;border:2px solid #0078d7"></div>
<div class="a" style="left:1195px;top:818px;width:2px;height:2px;background:#bcbcbc;"></div>
<div class="a" style="left:1192px;top:821px;width:2px;height:2px;background:#bcbcbc;"></div>
<div class="a" style="left:1195px;top:821px;width:2px;height:2px;background:#bcbcbc;"></div>
<div class="a" style="left:1189px;top:824px;width:2px;height:2px;background:#bcbcbc;"></div>
<div class="a" style="left:1192px;top:824px;width:2px;height:2px;background:#bcbcbc;"></div>
<div class="a" style="left:1195px;top:824px;width:2px;height:2px;background:#bcbcbc;"></div>
</body></html>
